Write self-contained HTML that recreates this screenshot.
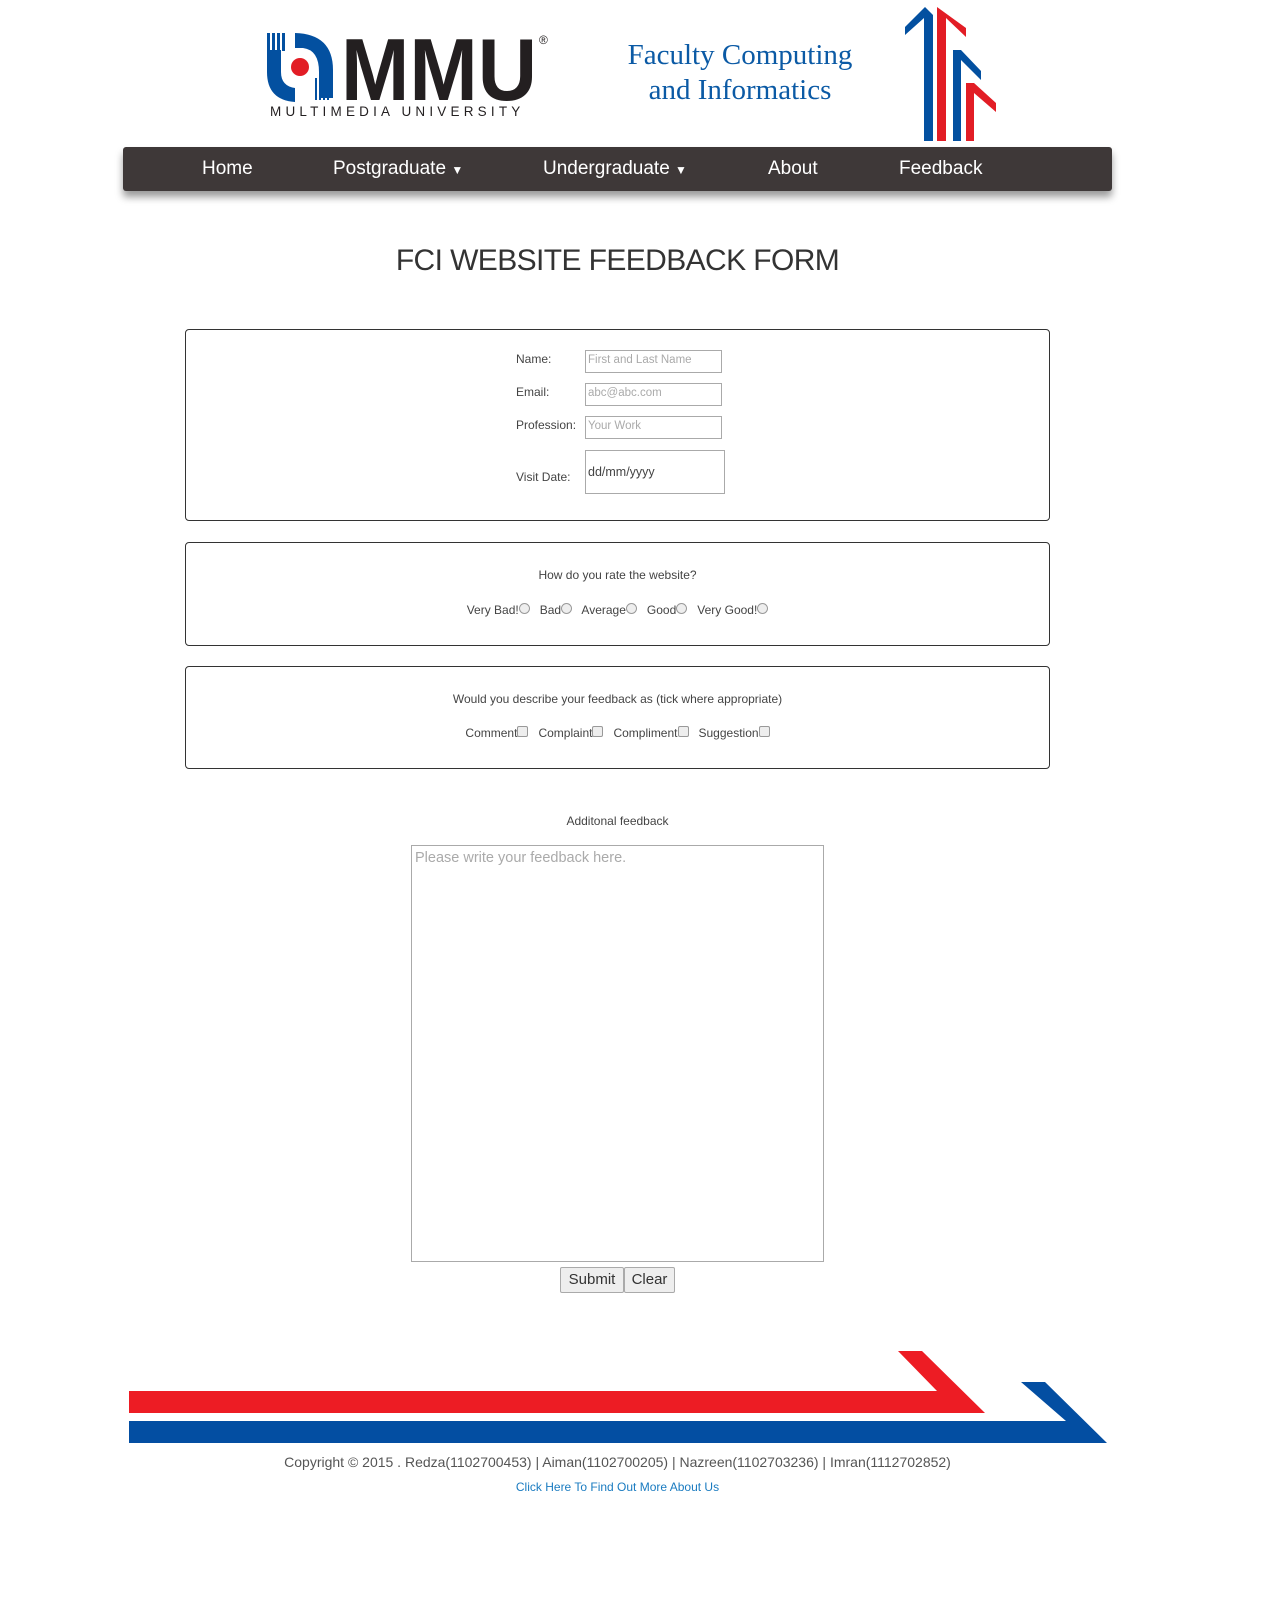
<!DOCTYPE html>
<html><head><meta charset="utf-8"><style>
*{box-sizing:border-box}
body{margin:0;width:1263px;height:1603px;background:#fff;font-family:"Liberation Sans",sans-serif;position:relative;color:#444}
.abs{position:absolute}
.nav{left:123px;top:147px;width:989px;height:44px;background:#3e3838;border-radius:3px;box-shadow:0 6px 8px rgba(0,0,0,.4)}
.nav span{position:absolute;top:11px;color:#fff;font-size:19px}
.box{position:absolute;left:185px;width:865px;border:1px solid #333;border-radius:4px}
.lbl{position:absolute;font-size:12px;color:#444}
.inp{position:absolute;border:1px solid #aaa;font-size:11.5px;color:#aaa;padding:3px 2px}
.rad{display:inline-block;width:11px;height:11px;border:1px solid #999;border-radius:50%;background:#eee;vertical-align:top}
.chk{display:inline-block;width:11px;height:11px;border:1px solid #999;border-radius:2px;background:#eee;vertical-align:top}
.row{position:absolute;left:0;width:100%;text-align:center;font-size:12px;color:#444}
.btn{position:absolute;top:1267px;height:26px;border:1px solid #aaa;background:#eee;font-size:15px;color:#333;text-align:center;line-height:24px;border-radius:2px}
</style></head><body>
<svg class="abs" style="left:265px;top:30px" width="290" height="92">
<g fill="#0350a0"><rect x="2" y="3" width="3" height="18"/><rect x="7" y="3" width="3" height="18"/><rect x="12" y="3" width="3" height="18"/><rect x="17" y="3" width="3" height="18"/>
<path d="M2 20 V42 Q2 70 30 72 V58 Q16 56 16 42 V20Z"/><path d="M30 3 Q68 4 68 40 V68 H54 V42 Q54 20 38 18 H30Z"/></g>
<g fill="#0350a0"><rect x="50" y="48" width="2" height="22"/><rect x="54" y="48" width="2" height="22"/><rect x="58" y="48" width="2" height="22"/><rect x="62" y="48" width="2" height="22"/></g>
<circle cx="35" cy="37" r="9" fill="#e21d25"/>
<text x="76" y="70" font-family="Liberation Sans" font-weight="bold" font-size="88" fill="#231f20" textLength="196" lengthAdjust="spacingAndGlyphs">MMU</text>
<text x="274" y="14" font-size="12" fill="#231f20">®</text>
<text x="5" y="86" font-size="13.5" fill="#231f20" letter-spacing="4.2">MULTIMEDIA UNIVERSITY</text>
</svg>
<div class="abs" style="left:600px;top:38px;width:280px;text-align:center;font-family:'Liberation Serif',serif;font-size:29px;color:#0b5aa5;line-height:35px">Faculty Computing<br>and Informatics</div>
<svg class="abs" style="left:903px;top:5px" width="95" height="138">
<path fill="#0350a0" d="M22 2 L2 22 V30 L21 13 V136 H30 V10Z"/>
<path fill="#e21d25" d="M34 2 V136 H43 V13 L63 32 V23Z"/>
<path fill="#0350a0" d="M50 45 V136 H58 V55 L78 75 V66 L58 45Z"/>
<path fill="#e21d25" d="M63 78 V136 H71 V88 L93 107 V98 L71 78Z"/>
</svg>
<div class="abs nav"><span style="left:79px">Home</span><span style="left:210px">Postgraduate <small style="font-size:12px">▼</small></span><span style="left:420px">Undergraduate <small style="font-size:12px">▼</small></span><span style="left:645px">About</span><span style="left:776px">Feedback</span></div>
<div class="abs" style="left:0;width:1235px;top:244px;text-align:center;font-size:30px;color:#333;letter-spacing:-0.6px">FCI WEBSITE FEEDBACK FORM</div>
<div class="box" style="top:329px;height:192px"></div>
<div class="lbl" style="left:516px;top:352px">Name:</div>
<div class="lbl" style="left:516px;top:385px">Email:</div>
<div class="lbl" style="left:516px;top:418px">Profession:</div>
<div class="lbl" style="left:516px;top:470px">Visit Date:</div>
<div class="inp" style="left:585px;top:350px;width:137px;height:23px">First and Last Name</div>
<div class="inp" style="left:585px;top:383px;width:137px;height:23px">abc@abc.com</div>
<div class="inp" style="left:585px;top:416px;width:137px;height:23px">Your Work</div>
<div class="inp" style="left:585px;top:450px;width:140px;height:44px;color:#444;font-size:12.5px;padding-top:14px">dd/mm/yyyy</div>
<div class="box" style="top:542px;height:104px"></div>
<div class="row" style="left:-14px;top:568px">How do you rate the website?</div>
<div class="row" style="left:-14px;top:603px">Very Bad!<span class="rad"></span> &nbsp; Bad<span class="rad"></span> &nbsp; Average<span class="rad"></span> &nbsp; Good<span class="rad"></span> &nbsp; Very Good!<span class="rad"></span></div>
<div class="box" style="top:666px;height:103px"></div>
<div class="row" style="left:-14px;top:692px">Would you describe your feedback as (tick where appropriate)</div>
<div class="row" style="left:-14px;top:726px">Comment<span class="chk"></span> &nbsp; Complaint<span class="chk"></span> &nbsp; Compliment<span class="chk"></span> &nbsp; Suggestion<span class="chk"></span></div>
<div class="row" style="left:-14px;top:814px">Additonal feedback</div>
<div class="abs" style="left:411px;top:845px;width:413px;height:417px;border:1px solid #aaa;font-size:14.5px;color:#aaa;padding:4px 3px">Please write your feedback here.</div>
<div class="btn" style="left:560px;width:64px">Submit</div>
<div class="btn" style="left:624px;width:51px">Clear</div>
<svg class="abs" style="left:0;top:1340px" width="1263" height="110">
<path fill="#ed1c24" d="M129 51 H937 L898 11 H922 L985 73 H129Z"/>
<path fill="#034ea2" d="M129 81 H1066 L1021 42 H1045 L1107 103 H129Z"/>
</svg>
<div class="abs" style="left:0;width:1235px;top:1454px;text-align:center;font-size:14px;color:#555">Copyright © 2015 . Redza(1102700453) | Aiman(1102700205) | Nazreen(1102703236) | Imran(1112702852)</div>
<div class="abs" style="left:0;width:1235px;top:1480px;text-align:center;font-size:12px;color:#1a7bc0">Click Here To Find Out More About Us</div>
</body></html>
